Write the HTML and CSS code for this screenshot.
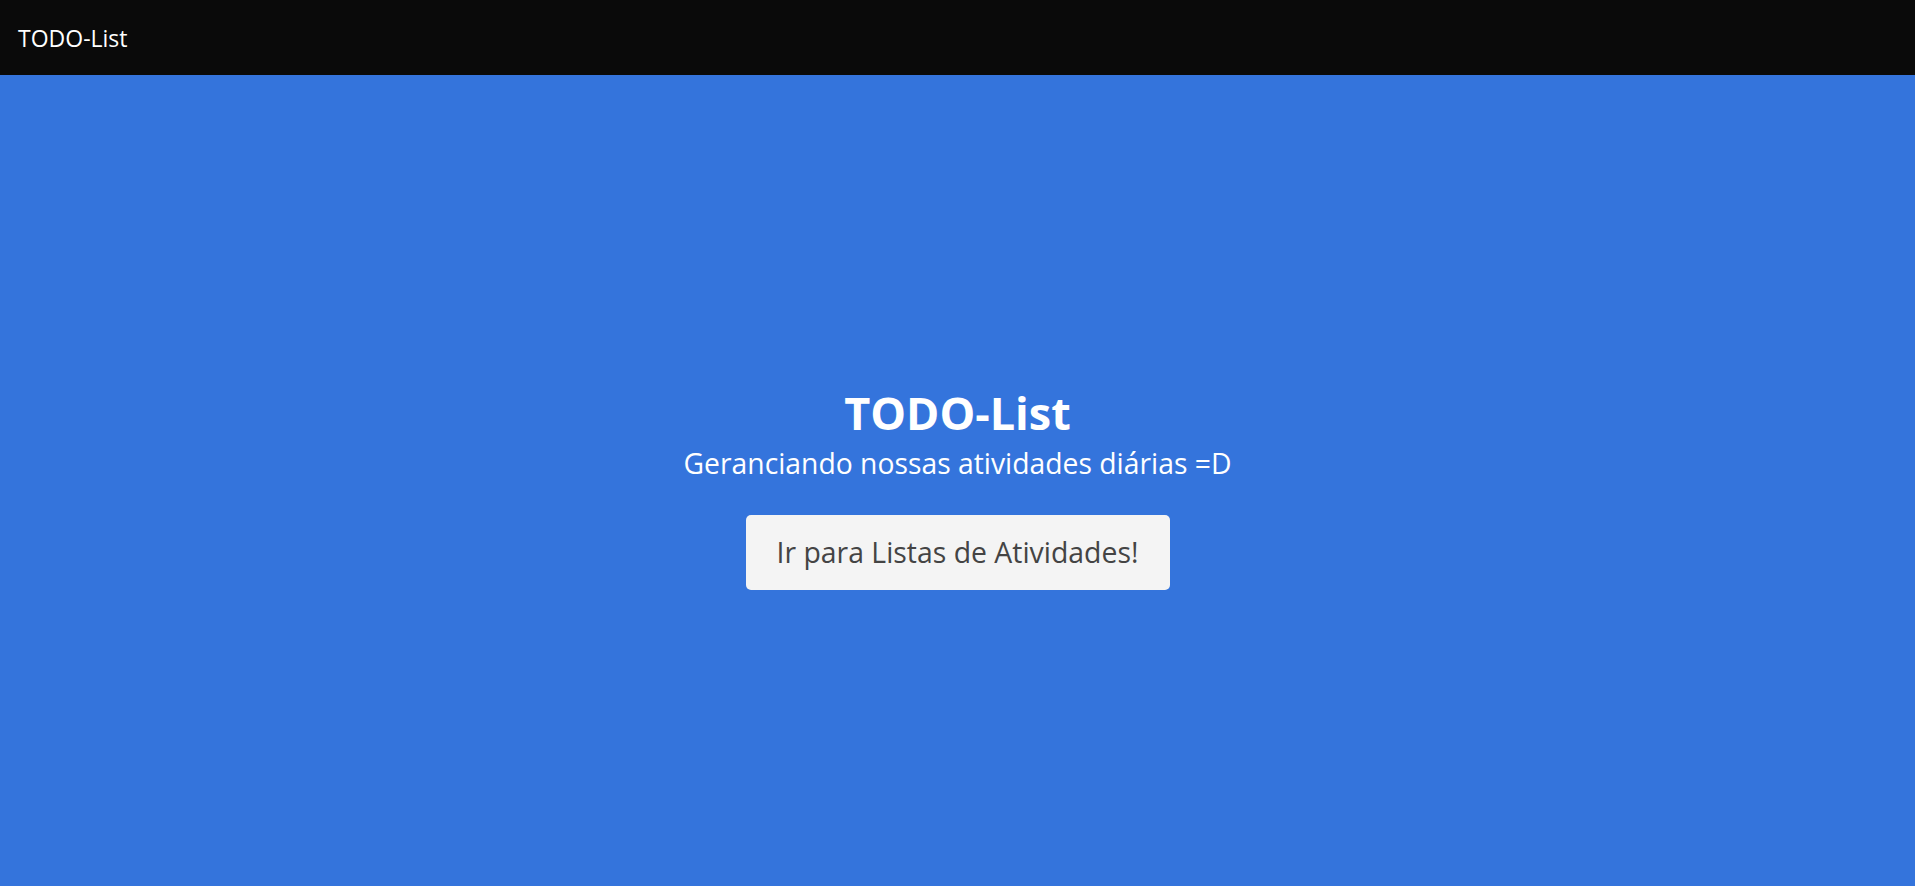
FILE: index.html
```html
<!DOCTYPE html>
<html lang="pt">
<head>
<meta charset="utf-8">
<title>TODO-List</title>
<link rel="stylesheet" href="styles.css">
</head>
<body>
<nav class="navbar"><span class="brand">TODO-List</span></nav>
<main class="hero">
  <h1 class="title">TODO-List</h1>
  <p class="subtitle">Geranciando nossas atividades diárias =D</p>
  <a class="btn" href="#">Ir para Listas de Atividades!</a>
</main>
</body>
</html>
```
FILE: styles.css
```css
* { box-sizing: border-box; }
html, body { margin: 0; height: 100%; }
body {
  font-family: "Open Sans", "Noto Sans", sans-serif;
  display: flex;
  flex-direction: column;
  background: #3474dc;
}
.navbar {
  height: 75px;
  flex: 0 0 75px;
  background: #0a0a0a;
  display: flex;
  align-items: center;
  padding: 0 18px;
}
.brand {
  color: #fff;
  font-size: 23px;
}
.hero {
  flex: 1;
  display: flex;
  flex-direction: column;
  align-items: center;
  justify-content: center;
  color: #fff;
  padding-top: 15px;
}
.title {
  margin: 0;
  font-size: 45px;
  font-weight: 700;
  line-height: 54px;
}
.subtitle {
  margin: 5px 0 34px;
  font-size: 28.3px;
  line-height: 36px;
}
.btn {
  display: inline-block;
  width: 424px;
  height: 75px;
  line-height: 75px;
  text-align: center;
  background: #f4f4f4;
  color: #444;
  border-radius: 5px;
  text-decoration: none;
  font-size: 28.4px;
}
```
